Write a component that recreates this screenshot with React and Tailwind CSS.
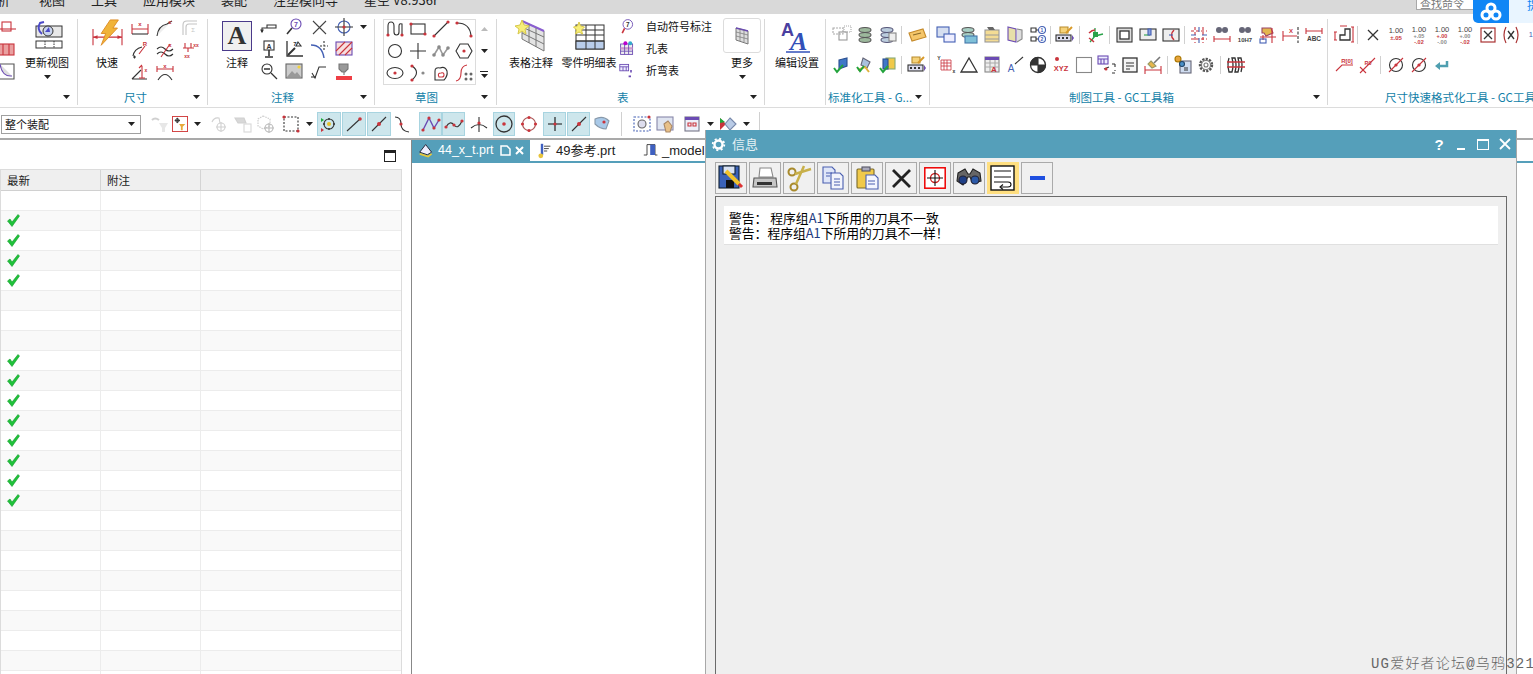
import React from "react";

const R = "#c9343c", K = "#333", B = "#4460b4", G = "#8a8a8a", P = "#6b4bb3", Y = "#e8a93a", T = "#4f9fb0";
const cjk = { fontFamily: '"Noto Sans CJK SC","Liberation Sans",sans-serif' };

const S = ({ s = 20, vb = "0 0 20 20", children, op }) => (
  <svg width={s} height={s} viewBox={vb} fill="none" stroke={K} strokeWidth="1.1" opacity={op} className="block shrink-0">{children}</svg>
);
const Dot = ({ x, y, r = 1.6, c = R }) => <circle cx={x} cy={y} r={r} fill={c} stroke="none" />;
const Tx = ({ x = 10, y, z = 6, c = R, w = 700, children }) => (
  <text x={x} y={y} fontSize={z} fill={c} stroke="none" fontWeight={w} textAnchor="middle" fontFamily="Liberation Sans">{children}</text>
);
const DimLine = ({ y = 10, x1 = 2, x2 = 18, h = 4, c = R }) => (
  <g stroke={c}><path d={`M${x1} ${y}H${x2}M${x1} ${y - h}V${y + h}M${x2} ${y - h}V${y + h}`} /></g>
);

const ic = {
  dimX: <S><DimLine y={11} h={5} /><Tx y={8}>x</Tx><path d="M2 16H18" stroke={K} /></S>,
  chamfer: <S><path d="M2 18C3 10 7 7 12 6L17 3" stroke={K} fill="#eee" /><Tx x={15} y={6}>c</Tx></S>,
  sumC: <S op=".5"><path d="M3 17V7q0-4 4-4H17M6 17V9q0-3 3-3h8" stroke={G} /><Tx x={13} y={14} c={G} w={400}>Σ</Tx></S>,
  radius: <S><path d="M3 16C4 10 8 8 12 7" stroke={K} /><path d="M9 14L15 6" stroke={R} /><Tx x={15} y={6}>R</Tx><path d="M3 17h3M4.500 15.500v3" stroke={K} /></S>,
  wave: <S><path d="M2 9q4-4 8 0t8 0M2 14q4-4 8 0t8 0" stroke={K} /><path d="M6 17L15 4" stroke={R} /><Tx x={15} y={7}>x</Tx></S>,
  holes: <S><path d="M5 3v5M11 3v5M3 8h11M8 8v4" stroke={R} /><Tx x={16} y={7} z={5}>xx</Tx><Tx x={7} y={18} z={5}>xx</Tx></S>,
  angle: <S><path d="M2 17H17M2 17L11 8" stroke={K} /><path d="M12 4V16M9 16h6M9 6l3-3" stroke={R} /><Tx x={16} y={10} z={5}>x</Tx></S>,
  arcDim: <S><path d="M3 18q7-11 14 0" stroke={K} /><DimLine y={7} h={3} /><Tx y={6}>x</Tx></S>,

  leader: <S><path d="M3 15V11h14v-3H8v3" stroke={K} /><path d="M3 15l-1-2h2z" fill={K} /></S>,
  balloon: <S><circle cx="12" cy="7" r="5" stroke={P} /><Tx x={12} y={9.500} c={P} z={7}>7</Tx><path d="M8 11L3 17" stroke={K} strokeWidth="1.600" /></S>,
  cross: <S><path d="M4 4L17 17M17 4L4 17" stroke="#444" /></S>,
  target: <S><circle cx="10" cy="10" r="6" stroke={B} /><path d="M1 10h18M10 1v18" stroke={K} /><Dot x={10} y={10} /></S>,
  aBox: <S><rect x="5" y="2" width="10" height="9" stroke={K} /><Tx y={9.500} c={K} z={7}>A</Tx><path d="M10 11v6M6 18h8" stroke={K} strokeWidth="1.600" /></S>,
  angleT: <S><path d="M3 2V17H19" stroke={K} strokeWidth="1.300" /><path d="M4 16L11 9" stroke={K} strokeWidth="2" /><Tx x={11} y={7} c={K} z={6}>7</Tx><path d="M14 3l3 4h-5z" stroke={K} /></S>,
  arcDash: <S><path d="M2 6q11 0 13 13" stroke={B} strokeWidth="1.400" /><path d="M11 7h8M15 2v9" stroke={K} strokeDasharray="2 1.500" /></S>,
  hatch: <S><rect x="2" y="3" width="16" height="13" stroke={P} fill="#f7dede" /><path d="M2 12L11 3M5 16L18 3M11 16L18 9" stroke={R} /></S>,
  zoom: <S><circle cx="8" cy="8" r="5" stroke={K} /><path d="M5 8h6M12 12L18 18" stroke={K} strokeWidth="1.300" /></S>,
  image: <S><rect x="2" y="3" width="16" height="14" stroke="#666" fill="#ccc" /><path d="M3 16l5-6 3 3 2-2 4 5z" fill="#999" stroke="none" /><circle cx="15" cy="6" r="1.600" fill="#f3d23c" stroke="none" /></S>,
  rough: <S><path d="M3 12l3 5 4-11h7" stroke={K} /><path d="M2 16h5" stroke={K} /></S>,
  stamp: <S><path d="M5 3h9v5l-3 3H8L5 8z" fill="#999" stroke="#777" /><path d="M10 11v3" stroke="#777" /><rect x="2" y="15" width="16" height="4" fill="#ef3e45" stroke="none" /></S>,

  skProfile: <S><path d="M3 16V7q0-4 3-4t3 4v6q0 3 2.500 3t2.500-3V7q0-3 3-2v11" stroke={K} /><Dot x={3} y={16} /><Dot x={17} y={16} /></S>,
  skRect: <S><rect x="3" y="5" width="14" height="10" stroke={K} /><Dot x={3} y={5} /><Dot x={17} y={15} /></S>,
  skLine: <S><path d="M3 17L17 3" stroke={K} /><Dot x={3} y={17} /><Dot x={17} y={3} /></S>,
  skArc: <S><path d="M3 4q13 0 14 13" stroke={K} /><Dot x={3} y={4} /><Dot x={17} y={17} /></S>,
  skCircle: <S><circle cx="10" cy="10" r="6.500" stroke={K} /></S>,
  skPlus: <S><path d="M2 10H18M10 2V18" stroke={K} /></S>,
  skSpline: <S><path d="M3 14L8 6l4 8 5-7" stroke="#999" strokeWidth="1.600" /><Dot x={3} y={14} c={G} r={1.800} /><Dot x={8} y={6} c={G} r={1.800} /><Dot x={12} y={14} c={G} r={1.800} /><Dot x={17} y={7} c={G} r={1.800} /></S>,
  skHex: <S><path d="M6 3h8l4 7-4 7H6l-4-7z" stroke={K} /><Dot x={10} y={10} /></S>,
  skEllipse: <S><ellipse cx="10" cy="10" rx="8" ry="5.500" stroke={K} /><Dot x={10} y={10} /></S>,
  skCurve: <S><path d="M4 3q9 6 0 14" stroke={K} /><Dot x={15} y={10} c={G} /><Dot x={4} y={3} /><Dot x={4} y={17} /></S>,
  skHeart: <S><path d="M4 17V8q0-4 5-3 5-2 7 3 1 5-3 9z" stroke={K} /><path d="M8 14q-2-4 2-4 3-1 3 2 0 2-2 2z" stroke={R} /></S>,
  skOffset: <S><path d="M2 18q5-1 5-8t6-8" stroke={R} /><g fill="#666" stroke="none"><circle cx="12" cy="11" r="1.500" /><circle cx="17" cy="11" r="1.500" /><circle cx="12" cy="16" r="1.500" /><circle cx="17" cy="16" r="1.500" /></g></S>,

  grp: <S><rect x="1" y="3" width="10" height="6" stroke="#aaa" strokeDasharray="2 1" /><rect x="7" y="7" width="8" height="8" stroke="#999" /><rect x="12" y="1" width="7" height="6" stroke="#aaa" strokeDasharray="1 1" /></S>,
  stack: <S><g stroke="#555" fill="#9cb89c"><ellipse cx="10" cy="5" rx="6" ry="2.500" /><ellipse cx="10" cy="10" rx="6" ry="2.500" /><ellipse cx="10" cy="15" rx="6" ry="2.500" /></g></S>,
  stackT: <S><g stroke="#557" fill="#bcd"><ellipse cx="9" cy="5" rx="6" ry="2.500" /><ellipse cx="9" cy="10" rx="6" ry="2.500" /><ellipse cx="9" cy="15" rx="6" ry="2.500" /></g><rect x="11" y="8" width="7" height="8" fill="#eee" stroke="#888" /></S>,
  tag: <S><path d="M2 8l14-4 3 8-14 4z" fill="#f5c66a" stroke="#c58a2a" /><path d="M6 10l8-2" stroke="#8a6a2a" /></S>,
  check1: <S><path d="M7 5l8-2v8l-8 3z" fill="#3f78c8" stroke="#2a4f90" /><path d="M2 13l3 4 6-7" stroke="#22a33c" strokeWidth="2" /></S>,
  check2: <S><path d="M8 3l7 4-3 6-6-3z" fill="#a9c0dd" stroke="#667" /><path d="M3 15l7-3 4 5" stroke="#e0b23c" strokeWidth="2" /><path d="M2 12l3 4 4-5" stroke="#22a33c" strokeWidth="2" /></S>,
  check3: <S><rect x="8" y="3" width="9" height="11" fill="#f0c94a" stroke="#8a7" /><rect x="5" y="4" width="5" height="10" fill="#3f78c8" stroke="#2a4f90" /><path d="M2 13l3 4 5-6" stroke="#22a33c" strokeWidth="2" /></S>,
  boxEdit: <S><path d="M5 2h8v6H5z" fill="#f5d27a" stroke="#b98c2c" /><rect x="1" y="10" width="15" height="6" fill="#dde" stroke={K} /><g fill={K} stroke="none"><rect x="3" y="12" width="2" height="2" /><rect x="7" y="12" width="2" height="2" /><rect x="11" y="12" width="2" height="2" /></g><path d="M17 10v6l2-3z" fill={P} stroke="none" /><path d="M11 8l6-6" stroke="#d99a2a" strokeWidth="2" /></S>,

  win: <S><rect x="1" y="2" width="12" height="10" fill="#d5def0" stroke={B} /><rect x="8" y="9" width="11" height="8" fill="#eef" stroke={B} /></S>,
  stackG: <S><g stroke="#555" fill="#a8cfc4"><ellipse cx="9" cy="5" rx="6" ry="2.500" /><ellipse cx="9" cy="10" rx="6" ry="2.500" /></g><rect x="6" y="11" width="12" height="7" fill="#7fc0d8" stroke="#47a" /></S>,
  tblY: <S><rect x="3" y="5" width="14" height="12" fill="#f4dc94" stroke="#999" /><path d="M3 10h14M3 14h14" stroke="#999" /><path d="M5 2h6l2 3H7z" fill="#666" stroke="none" /></S>,
  pen: <S><path d="M3 2l8 2v13l-8-2z" fill="#e7dfa9" stroke="#6b4bb3" /><path d="M12 4l5 1v9l-5 3" fill="#ddd" stroke="#888" /></S>,
  nums: <S><circle cx="14" cy="5" r="3.500" stroke={B} /><circle cx="14" cy="14" r="3.500" stroke={B} /><Tx x={14} y={7} z={5} c={B}>1</Tx><Tx x={14} y={16} z={5} c={B}>2</Tx><path d="M3 3h5v4H3zM3 12h5v4H3zM8 5h2M8 14h2" stroke={K} /></S>,
  axis: <S><path d="M9 11V3M9 11l8-2M9 11l-5 6" stroke="#2aa24a" strokeWidth="1.300" /><rect x="7" y="7" width="5" height="5" fill="#2aa24a" stroke="none" /><path d="M3 8q3-3 6-3M3 13q3 2 5 4" stroke={R} strokeWidth="1.500" /></S>,
  frame: <S><rect x="2" y="3" width="15" height="14" fill="#ddd" stroke={K} /><rect x="5" y="6" width="9" height="8" fill="#fff" stroke={K} strokeWidth="1.300" /></S>,
  frameB: <S vb="0 0 20 20"><rect x="2" y="4" width="16" height="11" fill="#eee" stroke={K} /><path d="M6 10h6" stroke="#2aa24a" /><rect x="10" y="4" width="3" height="6" fill="#88a0dd" stroke={B} /></S>,
  frameC: <S><rect x="2" y="4" width="16" height="12" fill="#eee" stroke={K} /><path d="M13 5q-5 5 0 10" stroke={R} strokeWidth="1.500" /><path d="M8 10h4" stroke={B} /></S>,
  dashGrid: <S><path d="M6 2v16M14 2v16M2 6h16M2 14h16" stroke={R} strokeDasharray="3 2" /><path d="M2 10h5M13 10h5M10 2v5M10 13v5" stroke={B} /></S>,
  binoDim: <S><circle cx="7" cy="5" r="3" fill="#667" stroke="none" /><circle cx="13" cy="5" r="3" fill="#667" stroke="none" /><DimLine y={14} h={3} /></S>,
  bino10: <S><circle cx="7" cy="5" r="3" fill="#667" stroke="none" /><circle cx="13" cy="5" r="3" fill="#667" stroke="none" /><Tx y={17} z={6} c="#444">10H7</Tx></S>,
  markGold: <S><path d="M4 3h9l2 5-7 3-2-3H4z" fill="#e3b64f" stroke="#946" /><path d="M2 12h16M14 3v15M5 10v5" stroke={R} /><rect x="2" y="14" width="6" height="4" stroke={B} /></S>,
  dimDash: <S><path d="M2 6v10M2 11h14" stroke={R} /><path d="M17 2v16" stroke={K} strokeDasharray="3 1.500" /><Tx x={10} y={8}>X</Tx></S>,
  abc: <S><DimLine y={6} h={3} /><Tx y={16} c="#444" z={6.500}>ABC</Tx></S>,
  gridX: <S><Tx x={3} y={5} z={5} c={K}>Y</Tx><path d="M5 5h10v10H5zM5 8h10M5 11h10M8 5v10M11 5v10" stroke={R} strokeWidth=".8" /><Tx x={18} y={18} z={5} c={K}>x</Tx></S>,
  tri: <S><path d="M10 3l8 14H2z" stroke={K} strokeWidth="1.300" /></S>,
  tblA: <S><rect x="3" y="2" width="14" height="15" fill="#eee" stroke="#888" /><rect x="3" y="2" width="14" height="3" fill={P} stroke="none" /><path d="M3 8h14M3 12h14M8 5v12M13 5v12" stroke="#aaa" /><Tx x={12} y={17} z={8} c={R}>A</Tx></S>,
  aArrow: <S><Tx x={6} y={17} z={10} c={B} w={400}>A</Tx><path d="M10 9L18 2" stroke={K} /></S>,
  quarter: <S><circle cx="10" cy="10" r="7.500" fill="#fff" stroke={K} strokeWidth="1.300" /><path d="M10 10V2.500a7.500 7.500 0 0 0-7.500 7.500zM10 10v7.500a7.500 7.500 0 0 0 7.500-7.500z" fill={K} /></S>,
  xyz: <S><Dot x={6} y={4} r={2} /><Tx y={16} z={7.500}>XYZ</Tx></S>,
  blank: <S><rect x="2.500" y="2.500" width="15" height="15" stroke="#888" /></S>,
  tblArrow: <S><rect x="1" y="1" width="10" height="8" fill="#eef" stroke={P} /><path d="M1 4h10M4 4v5M7 4v5" stroke={P} /><path d="M15 9h3M18 9v3M18 16v-1M15 18h3M7 14l5-2" stroke={K} /><Dot x={9} y={14} r={1.500} /></S>,
  doc: <S><rect x="3" y="3" width="14" height="14" stroke={K} fill="#f4f4f4" strokeWidth="1.300" /><path d="M6 8h8M6 11h8M6 14h4" stroke={K} /></S>,
  brush: <S><path d="M17 2l-6 6" stroke="#777" strokeWidth="1.600" /><path d="M8 6l5 5-4 2-4-4z" fill="#e8b74a" stroke="#996" /><DimLine y={15} h={4} /></S>,
  cfg: <S><rect x="7" y="6" width="11" height="12" fill="#cfdcf0" stroke="#667" /><circle cx="5" cy="4" r="3" fill="#e7a43c" stroke="#a70" /><circle cx="9" cy="9" r="2.500" fill="#4a90c8" stroke="#246" /><path d="M11 13h4M11 15h4" stroke={K} /></S>,
  gear: <S><circle cx="10" cy="10" r="6" stroke="#555" strokeWidth="2.400" strokeDasharray="2.200 1.200" /><circle cx="10" cy="10" r="4.500" stroke="#777" /><circle cx="10" cy="10" r="2" stroke="#777" /></S>,
  spring: <S><path d="M3 3q-2 6 0 14h3q2-7 0-14h3q2 7 0 14h3q2-7 0-14h3q2 7 0 14" stroke={K} strokeWidth="1.300" /><path d="M1 7h18M1 12h18" stroke={R} strokeWidth="1.300" /></S>,

  stepDim: <S><path d="M6 15V10h5V4h5v11z" stroke={K} strokeWidth="1.300" /><path d="M1 7v8M0 7h3M0 15h3M19 2v15M17 2h3M17 17h3M6 1h7" stroke={R} /></S>,
  xThin: <S><path d="M5 5L15 15M15 5L5 15" stroke={K} strokeWidth="1.300" /></S>,
  xBox: <S><rect x="3" y="3" width="14" height="14" stroke="#a33" strokeWidth="1.200" /><path d="M6 6L14 14M14 6L6 14" stroke={K} strokeWidth="1.300" /></S>,
  xParen: <S><path d="M5 2q-4 8 0 16M15 2q4 8 0 16" stroke="#a33" strokeWidth="1.200" /><path d="M7 6L13 14M13 6L7 14" stroke={K} strokeWidth="1.300" /></S>,
  rDim: <S><path d="M2 16L8 10H19" stroke={R} /><Tx x={13} y={8} z={6}>R[0]</Tx></S>,
  rSlant: <S><path d="M3 18L18 3" stroke={R} /><path d="M3 12L9 18" stroke={R} /><Tx x={11} y={10} z={5.500}>R0</Tx></S>,
  dia1: <S><circle cx="10" cy="10" r="6.500" stroke={K} /><path d="M3 17L17 3" stroke={R} /><Dot x={10} y={10} r={1.600} /></S>,
  backArrow: <S><path d="M15 6v5H7" stroke={T} strokeWidth="2.500" /><path d="M8 7l-5 4 5 4z" fill={T} stroke="none" /></S>,
  tol1: <S vb="0 0 20 20"><Tx y={8} z={7.500} c="#444" w={400}>1.00</Tx><Tx y={15} z={6} w={700}>±.05</Tx></S>,
  tol2: <S><Tx y={7} z={7.500} c="#444" w={400}>1.00</Tx><Tx y={13} z={5.500} c={G}>+.05</Tx><Tx y={19} z={5.500}>-.02</Tx></S>,
  tol3: <S><Tx y={7} z={7.500} c="#444" w={400}>1.00</Tx><Tx y={13} z={5.500} c={R}>+.00</Tx><Tx y={19} z={5.500} c={G}>-.00</Tx></S>,
  tol4: <S><Tx y={7} z={7.500} c="#444" w={400}>1.00</Tx><Tx y={13} z={5.500} c={G}>+.00</Tx><Tx y={19} z={5.500}>-.02</Tx></S>,
  tol5: <S><Tx y={12} z={7.500} c={B} w={400}>1.0</Tx></S>,

  filterG: <S op=".45"><path d="M2 6q3-3 7 0" stroke="#999" strokeWidth="2" /><path d="M9 9h9l-3 5v4h-3v-4z" fill="#ccc" stroke="none" /></S>,
  selFilter: <S s={16} vb="0 0 18 18"><rect x=".5" y=".5" width="17" height="17" stroke="#d03a3a" /><path d="M3 5h6M6 2v6" stroke={K} /><circle cx="6" cy="5" r="2" stroke={K} /><path d="M8 9h7l-3 3v4h-2v-4z" fill={Y} stroke="none" /></S>,
  faded1: <S op=".45"><path d="M3 8q2-5 7-4l1 5" stroke="#999" /><circle cx="12" cy="13" r="4" stroke="#999" /><path d="M7 13h10M12 8v10" stroke="#999" /></S>,
  faded2: <S op=".45"><path d="M2 4h9l2 5H5z" fill="#aaa" stroke="#999" /><rect x="11" y="10" width="7" height="8" stroke="#aaa" /></S>,
  faded3: <S op=".5"><path d="M7 2l7 3v7l-7 3-5-3V5z" stroke="#999" strokeDasharray="1.500 1" /><circle cx="13" cy="14" r="4" stroke="#777" /><path d="M8 14h10M13 9v10" stroke="#777" /></S>,
  selBox: <S><rect x="3" y="3" width="14" height="14" stroke={K} strokeDasharray="2 1.500" /><Dot x={3} y={3} /><Dot x={17} y={17} /></S>,
  snap1: <S><circle cx="10" cy="10" r="5" stroke={K} /><Dot x={10} y={10} c="#e6c02c" r={2} /><path d="M2 4l3 2-3 2z" fill="#1faa3c" stroke="none" /><path d="M2 14l3 2-3 2z" fill={R} stroke="none" /><circle cx="5" cy="10" r="1" fill={K} stroke="none" /><circle cx="15" cy="10" r="1" fill={K} stroke="none" /><circle cx="10" cy="5" r="1" fill={K} stroke="none" /><circle cx="10" cy="15" r="1" fill={K} stroke="none" /></S>,
  end: <S><path d="M3 17L16 5" stroke={K} /><Dot x={16} y={5} r={1.800} /></S>,
  mid: <S><path d="M3 17L17 3" stroke={K} /><Dot x={10} y={10} r={2} /></S>,
  sCurve: <S><path d="M3 3q6 0 6 7t8 8" stroke={K} /><Dot x={9} y={10} /></S>,
  poly: <S><path d="M2 16L8 4l5 10 5-8" stroke={P} strokeWidth="1.400" /><Dot x={2} y={16} /><Dot x={8} y={4} /><Dot x={13} y={14} /><Dot x={18} y={6} /></S>,
  swave: <S><path d="M2 13q4-7 8-2t8-4" stroke={K} /><Dot x={2} y={13} /><Dot x={10} y={11} /><Dot x={18} y={7} /></S>,
  tee: <S><path d="M2 14q8-7 16 0M10 3V18" stroke={K} /><Dot x={10} y={9} /></S>,
  cCircle: <S><circle cx="10" cy="10" r="8" stroke={K} strokeWidth="1.300" /><Dot x={10} y={10} r={1.800} /></S>,
  qCircle: <S><circle cx="10" cy="10" r="6.500" stroke="#a55" /><Dot x={10} y={3.500} /><Dot x={10} y={16.500} /><Dot x={3.500} y={10} /><Dot x={16.500} y={10} /></S>,
  plusT: <S><path d="M3 10H17M10 3V17" stroke="#111" /><Dot x={10} y={10} /></S>,
  shell: <S><path d="M3 5q8-4 14 2l-3 8Q8 15 3 10z" fill="#a9c9e8" stroke="#89a" /><Dot x={12} y={8} /></S>,
  zoomWin: <S><rect x="2" y="3" width="16" height="14" stroke={B} strokeDasharray="2 1.500" /><circle cx="10" cy="10" r="4" fill="#dde" stroke="#666" /><Dot x={17} y={3} /></S>,
  hand: <S><rect x="2" y="3" width="16" height="13" fill="#dfe4f0" stroke="#88a" /><path d="M9 10l4-3 4 5-2 6h-4z" fill="#e8c088" stroke="#a86" /></S>,
  tbl4: <S><rect x="3" y="3" width="14" height="14" fill="#eef0fa" stroke="#778" /><rect x="3" y="3" width="14" height="3" fill={P} stroke="none" /><path d="M6 9h3v3H6zM11 9h3v3h-3z" stroke={R} /></S>,
  diamond: <S><path d="M2 4l6 6-6 6z" fill={R} stroke="none" /><path d="M2 4l5 4-5 1z" fill="#1faa3c" stroke="none" /><path d="M12 4l6 6-6 6-5-6z" fill="#b9cbe6" stroke="#78a" /></S>,

  saveEdit: <S s={28} vb="0 0 28 28"><rect x="2" y="2" width="20" height="22" fill="#3a62b8" stroke="#123" /><rect x="6" y="2" width="12" height="8" fill="#d8e2f4" stroke="#123" /><rect x="9" y="16" width="8" height="8" fill="#111" stroke="none" /><path d="M9 7L22 20" stroke="#f1c32c" strokeWidth="4" /><path d="M22 20l3 3" stroke="#d33" strokeWidth="3" /></S>,
  print: <S s={28} vb="0 0 28 28"><path d="M9 4h11l2 9H8z" fill="#fff" stroke="#888" /><path d="M3 14h22l1 9H2z" fill="#c6c6c6" stroke="#555" /><rect x="6" y="18" width="15" height="3" fill="#333" stroke="none" /></S>,
  scissors: <S s={28} vb="0 0 28 28"><circle cx="7" cy="8" r="3.500" stroke="#a88a2c" strokeWidth="2" /><circle cx="9" cy="23" r="3.500" stroke="#a88a2c" strokeWidth="2" /><path d="M10 10L26 5M11 20L19 2" stroke="#c8b04a" strokeWidth="2.500" /></S>,
  copy: <S s={28} vb="0 0 28 28"><path d="M4 3h9l3 3v13H4z" fill="#dfe6f8" stroke="#4a5fb0" /><path d="M12 9h9l3 3v13H12z" fill="#f2f4fc" stroke="#4a5fb0" /><path d="M7 9h6M7 12h4M15 15h6M15 18h6M15 21h6" stroke="#4a5fb0" /></S>,
  paste: <S s={28} vb="0 0 28 28"><rect x="4" y="5" width="17" height="19" rx="1" fill="#f0c94a" stroke="#7a6a2a" /><rect x="9" y="3" width="8" height="4" fill="#aab" stroke="#556" /><path d="M13 11h9l3 3v11H13z" fill="#f4f6ff" stroke="#4a5fb0" /><path d="M15 17h7M15 20h7" stroke="#4a5fb0" /></S>,
  bigX: <S s={28} vb="0 0 28 28"><path d="M6 6L23 23M23 6L6 23" stroke="#222" strokeWidth="2.800" /></S>,
  redTarget: <S s={22} vb="0 0 22 22"><rect x=".8" y=".8" width="20.400" height="20.400" fill="#fff" stroke="#e00" strokeWidth="1.500" /><circle cx="11" cy="11" r="4.500" stroke="#c22" strokeWidth="1.300" /><path d="M3 11H19M11 3V19" stroke="#111" /></S>,
  bino: <S s={28} vb="0 0 28 28"><path d="M3 9l7-4 3 5 2 0 3-5 7 4 1 8-8 2-3-6h-2l-5 8-6-4z" fill="#666" stroke="#222" /><circle cx="8" cy="16" r="4" fill="#1f3f86" stroke="#223" /><circle cx="20" cy="16" r="4" fill="#2c5aa8" stroke="#223" /></S>,
  wrap: <S s={26} vb="0 0 26 26"><rect x="1" y="1" width="23" height="24" fill="#fff" stroke="#111" strokeWidth="1.400" /><path d="M4 6h17M4 12h17M4 17h14q3 0 3 2.500T18 22h-7" stroke="#111" /><path d="M13 19.500L10 22l3 2.500" stroke="#111" /></S>,
  minus: <S s={20} vb="0 0 20 20"><rect x="3" y="8" width="15" height="4" fill="#1f4fe0" stroke="none" /></S>,
};

const Caret = () => (
  <svg width="7" height="4" viewBox="0 0 7 4" className="block shrink-0"><path d="M0 0h7L3.500 4z" fill="#222" /></svg>
);
const Cell = ({ w = 23, h = 22, children, cn = "" }) => (
  <div className={`flex shrink-0 items-center justify-center ${cn}`} style={{ width: w, height: h }}>{children}</div>
);
const Sep = ({ n = 4, h = 18 }) => {
  const ml = Math.floor((n - 1) / 2);
  return <div className="shrink-0 bg-[#d0d0d0]" style={{ width: 1, height: h, marginLeft: ml, marginRight: n - 1 - ml }} />;
};
const Row = ({ items, w = 23, cn = "" }) => (
  <div className={`flex items-center ${cn}`}>
    {items.map((k, i) =>
      typeof k === "number" ? <Sep key={i} n={k} /> : <Cell key={i} w={w}>{ic[k]}</Cell>
    )}
  </div>
);

const GroupFoot = ({ label, caretLeft, labelLeft }) => (
  <div className="relative h-[16px]">
    <span className="absolute top-0 whitespace-nowrap text-[11.5px] leading-[16px] text-[#127fa8]" style={{ left: labelLeft }}>{label}</span>
    {caretLeft != null && <span className="absolute top-[6px]" style={{ left: caretLeft }}><Caret /></span>}
  </div>
);

const Group = ({ w, label, labelLeft, caretLeft, sep = true, children }) => (
  <div className={`relative flex shrink-0 flex-col ${sep ? "border-r border-[#d8d8d8]" : ""}`} style={{ width: w, height: 86 }}>
    <div className="h-[70px]">{children}</div>
    <GroupFoot label={label} labelLeft={labelLeft} caretLeft={caretLeft} />
  </div>
);

const BigBtn = ({ w, icon, label, caret, up }) => (
  <div className="flex shrink-0 flex-col items-center" style={{ width: w }}>
    <div className="flex h-[34px] items-center justify-center">
      <div className={up ? "-mt-[6px]" : ""}>{icon}</div>
    </div>
    <div className="mt-[1px] whitespace-nowrap text-[11px] leading-[16px] text-[#111]">{label}</div>
    {caret && <div className="mt-[5px]"><Caret /></div>}
  </div>
);

const UpdateView = (
  <svg width="34" height="32" viewBox="0 0 34 32" fill="none" className="block">
    <rect x="6" y="6" width="26" height="11" fill="#e8e8e8" stroke="#333" />
    <rect x="6" y="21" width="26" height="7" stroke="#333" />
    <path d="M15 21v7M24 21v7" stroke="#333" strokeDasharray="1.500 1" />
    <circle cx="18" cy="11" r="5" stroke="#333" fill="#c9d4ee" />
    <path d="M12 14A8 8 0 0 1 10 3l4-1" stroke="#4b49c8" strokeWidth="2" />
    <path d="M15 12l4-5 1 5z" fill="#4b49c8" />
  </svg>
);
const Quick = (
  <svg width="31" height="29" viewBox="0 0 34 32" fill="none" className="block">
    <path d="M1 11V29M33 11V29M1 20H33" stroke="#c8323c" strokeWidth="1.200" />
    <path d="M1 20l5-2v4zM33 20l-5-2v4z" fill="#c8323c" />
    <path d="M20 1h9l-6 9h5L10 29l5-13h-5z" fill="#f0b43a" stroke="#dd8a22" />
  </svg>
);
const AnnoA = (
  <div className="flex h-[30px] w-[30px] items-center justify-center border-[1.500px] border-[#4a3a8a] bg-[#f0f0f0] text-[26px] font-bold leading-none text-[#333]" style={{ fontFamily: '"Liberation Serif",serif' }}>A</div>
);
const TableNote = (
  <svg width="34" height="34" viewBox="0 0 34 34" fill="none" className="block">
    <path d="M8 2L30 12V32L8 20z" fill="#e3e3e3" stroke="#777" />
    <path d="M8 2L30 12" stroke="#8a5ed0" strokeWidth="2" />
    <path d="M8 8L30 18M8 14L30 25M15 5V24M22 9V28" stroke="#777" />
    <path d="M8 1l2 5 5 1-4 3 1 5-4-3-4 3 1-5-4-3 5-1z" fill="#f7ee7a" stroke="#d8c94a" />
  </svg>
);
const PartList = (
  <svg width="34" height="28" viewBox="0 0 34 28" fill="none" className="block">
    <rect x="4" y="3" width="28" height="24" fill="#fff" stroke="#333" />
    <rect x="4" y="19" width="28" height="8" fill="#b9cdea" stroke="#333" />
    <path d="M4 8H32M4 13H32M4 19H32M14 3V27M23 3V27" stroke="#333" />
    <path d="M7 0l1.500 4 4 1-3 3 1 4L7 10l-3.500 2 1-4-3-3 4-1z" fill="#f7ee7a" stroke="#d8c94a" />
  </svg>
);
const EditA = (
  <svg width="34" height="34" viewBox="0 0 34 34" className="block">
    <text x="1" y="17" fontSize="18" fontWeight="700" fill="#4a3fa0" fontFamily="Liberation Sans">A</text>
    <text x="10" y="31" fontSize="26" fontWeight="700" fontStyle="italic" fill="#3250b8" fontFamily="Liberation Serif">A</text>
    <path d="M6 33H30" stroke="#3250b8" strokeWidth="1.500" />
  </svg>
);
const Cloud = (
  <svg width="22" height="19" viewBox="0 0 22 19" fill="none" className="block">
    <circle cx="11" cy="6" r="4" stroke="#fff" strokeWidth="3" />
    <circle cx="6" cy="13" r="4" stroke="#fff" strokeWidth="3" />
    <circle cx="16" cy="13" r="4" stroke="#fff" strokeWidth="3" />
  </svg>
);
const Check = () => (
  <svg width="13" height="13" viewBox="0 0 13 13" className="block"><path d="M0.500 7L3 5l2 3 6-7.500L12.500 2 5 12.500z" fill="#1fc23a" stroke="#119a2a" strokeWidth=".6" /></svg>
);

const TB = ({ w, ml = 0, active, k, caret }) => (
  <div
    className={`flex h-[24px] shrink-0 items-center justify-center ${active ? "border border-[#a8d4e0] bg-[#cde6ec]" : ""}`}
    style={{ width: w, marginLeft: ml }}
  >
    {caret ? <Caret /> : ic[k]}
  </div>
);

const checks = new Set([1, 2, 3, 4, 8, 9, 10, 11, 12, 13, 14, 15]);
const dlgBtns = ["saveEdit", "print", "scissors", "copy", "paste", "bigX", "redTarget", "bino", "wrap", "minus"];

export default function App() {
  return (
    <div className="relative h-[674px] w-[1533px] overflow-hidden bg-white" style={cjk}>
      {/* menu bar */}
      <div className="flex h-[14px] items-start gap-[26px] overflow-hidden bg-[#d9d9d9] text-[13px] leading-[14px] text-[#222]">
        <span className="-mt-[7px] -ml-[3px] mr-[3px]">析</span>
        <span className="-mt-[7px]">视图</span>
        <span className="-mt-[7px]">工具</span>
        <span className="-mt-[7px]">应用模块</span>
        <span className="-mt-[7px]">装配</span>
        <span className="-mt-[7px]">注塑模向导</span>
        <span className="-mt-[7px]">星空 V8.936r</span>
      </div>

      {/* ribbon */}
      <div className="flex h-[94px] items-start overflow-hidden border-b border-[#dcdcdc] pt-[5px]">
        <Group w={78} label="" labelLeft={0} caretLeft={63}>
          <div className="flex">
            <div className="-mt-[1px] flex w-[16px] shrink-0 flex-col items-end overflow-hidden">
              <Cell w={20} h={21} cn="shrink-0"><S s={20}><rect x="6" y="3" width="9" height="9" stroke={R} /><path d="M0 10H20" stroke={R} /></S></Cell>
              <Cell w={20} h={21} cn="shrink-0"><S s={20}><rect x="1" y="4" width="17" height="11" fill="#e9a0a0" stroke={R} /><path d="M7 4v11M13 4v11" stroke={R} /></S></Cell>
              <Cell w={20} h={21} cn="shrink-0"><S s={20}><path d="M2 3H18V18H2z" stroke="#555" /><path d="M4 3q2 13 12 12" stroke={P} fill="#ddd" /></S></Cell>
            </div>
            <div className="ml-[1px]"><BigBtn w={60} icon={UpdateView} label="更新视图" caret /></div>
          </div>
        </Group>
        <Group w={130} label="尺寸" labelLeft={46} caretLeft={115}>
          <div className="flex">
            <BigBtn w={58} icon={Quick} label="快速" up />
            <div className="-ml-[8.500px] -mt-[2px] flex flex-col">
              <Row w={25} items={["dimX", "chamfer", "sumC"]} />
              <Row w={25} items={["radius", "wave", "holes"]} />
              <Row w={25} items={["angle", "arcDim"]} />
            </div>
          </div>
        </Group>
        <Group w={167} label="注释" labelLeft={63} caretLeft={152}>
          <div className="flex">
            <BigBtn w={58} icon={AnnoA} label="注释" />
            <div className="-ml-[9.500px] -mt-[3px] flex flex-col">
              <div className="flex items-center">
                <Row w={25} items={["leader", "balloon", "cross", "target"]} />
                <div className="ml-[3px]"><Caret /></div>
              </div>
              <Row w={25} items={["aBox", "angleT", "arcDash", "hatch"]} />
              <Row w={25} items={["zoom", "image", "rough", "stamp"]} />
            </div>
          </div>
        </Group>
        <Group w={122} label="草图" labelLeft={40} caretLeft={106}>
          <div className="flex pl-[8px]">
            <div className="grid h-[66px] w-[93px] grid-cols-[repeat(4,23px)] content-center justify-center border border-[#dcdcdc] pb-[3px]">
              {["skProfile", "skRect", "skLine", "skArc", "skCircle", "skPlus", "skSpline", "skHex", "skEllipse", "skCurve", "skHeart", "skOffset"].map((k) => (
                <Cell key={k} h={22}>{ic[k]}</Cell>
              ))}
            </div>
            <div className="ml-[4px] flex flex-col items-center gap-[18px] pt-[8px]">
              <svg width="7" height="4" viewBox="0 0 7 4" className="block"><path d="M0 4L3.500 0 7 4z" fill="#bbb" /></svg>
              <Caret />
              <div className="flex flex-col items-center gap-[2px]"><div className="h-[1px] w-[8px] bg-[#222]" /><Caret /></div>
            </div>
          </div>
        </Group>
        <Group w={268} label="表" labelLeft={120} caretLeft={253}>
          <div className="flex">
            <BigBtn w={68} icon={TableNote} label="表格注释" />
            <BigBtn w={48} icon={PartList} label="零件明细表" />
            <div className="-mt-[4px] ml-[6px] flex w-[101px] shrink-0 flex-col text-[11px] leading-[22px] text-[#111]">
              <div className="flex items-center gap-[3px]"><S s={16}><circle cx="11" cy="8" r="6" stroke={P} /><Tx x={11} y={11} z={8} c={K}>7</Tx><path d="M7 13L4 19" stroke={R} strokeWidth="2" /></S><span className="ml-[8px]">自动符号标注</span></div>
              <div className="flex items-center gap-[3px]"><S s={16}><rect x="2" y="5" width="15" height="13" fill="#eee" stroke={P} /><rect x="2" y="9" width="15" height="3" fill="#c9c" stroke="none" /><path d="M7 5v13M12 5v13M2 14h15" stroke={P} /><circle cx="8" cy="4" r="2.500" fill="#b0c" stroke="none" /><circle cx="14" cy="4" r="2.500" fill="#3ac" stroke="none" /></S><span className="ml-[8px]">孔表</span></div>
              <div className="flex items-center gap-[3px]"><S s={16}><rect x="1" y="3" width="11" height="8" fill="#eef" stroke={P} /><path d="M1 6h11M5 6v5M9 6v5" stroke={P} /><path d="M15 10v3M12 18h3" stroke={P} strokeWidth="2" /></S><span className="ml-[8px]">折弯表</span></div>
            </div>
            <div className="flex w-[44px] shrink-0 flex-col items-center">
              <div className="-mt-[1px] flex h-[35px] w-[38px] items-center justify-center rounded-[3px] border border-[#dcdcdc]">
                <svg width="16" height="18" viewBox="0 0 16 18" fill="none"><path d="M2 1L14 4V17L2 13z" fill="#ddd" stroke="#777" /><path d="M2 1L14 4" stroke={P} strokeWidth="1.500" /><path d="M2 5L14 8M2 9L14 12M6 2V14M10 3V15" stroke="#777" strokeWidth=".7" /></svg>
              </div>
              <div className="mt-[1px] text-[11px] leading-[16px] text-[#111]">更多</div>
              <div className="mt-[5px]"><Caret /></div>
            </div>
          </div>
        </Group>
        <Group w={61} label="" labelLeft={0}>
          <div className="ml-[1.500px]"><BigBtn w={61} icon={EditA} label="编辑设置" /></div>
        </Group>
        <Group w={104} label="标准化工具 - G..." labelLeft={2} caretLeft={89}>
          <div className="flex flex-col gap-[8px] pl-[4px] pt-[5px]">
            <Row items={["grp", "stack", "stackT", 6, "tag"]} />
            <Row items={["check1", "check2", "check3", 6, "boxEdit"]} />
          </div>
        </Group>
        <Group w={398} label="制图工具 - GC工具箱" labelLeft={139} caretLeft={383}>
          <div className="flex flex-col gap-[8px] pl-[4px] pt-[5px]">
            <Row items={["win", "stackG", "tblY", "pen", "nums", 4, "boxEdit", 8, "axis", 6, "frame", "frameB", "frameC", 5, "dashGrid", "binoDim", "bino10", "markGold", "dimDash", "abc"]} />
            <Row items={["gridX", "tri", "tblA", "aArrow", "quarter", "xyz", "blank", "tblArrow", "doc", "brush", 7, "cfg", "gear", 7, "spring"]} />
          </div>
        </Group>
        <Group w={205} sep={false} label="尺寸快速格式化工具 - GC工具箱" labelLeft={57}>
          <div className="flex flex-col gap-[8px] pl-[4px] pt-[5px]">
            <Row items={["stepDim", 6, "xThin", "tol1", "tol2", "tol3", "tol4", "xBox", "xParen", "tol5"]} />
            <Row items={["rDim", "rSlant", 6, "dia1", "dia1", "backArrow"]} />
          </div>
        </Group>
      </div>

      {/* selection toolbar */}
      <div className="flex h-[32px] items-center border-b-[2px] border-[#a9a9a9] pl-[1px] pt-[2px]">
        <div className="flex h-[19px] w-[140px] shrink-0 items-center justify-between border border-[#a0a0a0] pl-[3px] pr-[5px] text-[11px] text-[#111]">
          <span>整个装配</span>
          <Caret />
        </div>
        <TB w={20} ml={9} k="filterG" />
        <TB w={20} k="selFilter" />
        <TB w={14} caret />
        <TB w={30} k="faded1" />
        <TB w={18} k="faded2" />
        <TB w={28} k="faded3" />
        <TB w={22} k="selBox" />
        <TB w={14} caret />
        <TB w={24} ml={1} active k="snap1" />
        <TB w={24} ml={1} active k="end" />
        <TB w={24} ml={1} active k="mid" />
        <TB w={22} k="sCurve" />
        <TB w={23} ml={6} active k="poly" />
        <TB w={23} active k="swave" />
        <TB w={28} k="tee" />
        <TB w={22} active k="cCircle" />
        <TB w={28} k="qCircle" />
        <TB w={23} active k="plusT" />
        <TB w={23} ml={1} active k="mid" />
        <TB w={24} k="shell" />
        <div className="ml-[7px] h-[24px] w-[1px] shrink-0 bg-[#d0d0d0]" />
        <TB w={22} ml={9} k="zoomWin" />
        <TB w={24} k="hand" />
        <TB w={30} k="tbl4" />
        <TB w={6} caret />
        <TB w={30} k="diamond" />
        <TB w={6} caret />
        <div className="ml-[10px] h-[24px] w-[1px] shrink-0 bg-[#d0d0d0]" />
      </div>

      {/* main */}
      <div className="flex h-[534px]">
        {/* left panel */}
        <div className="w-[412px] shrink-0 border-r border-[#888888]">
          <div className="flex h-[29px] items-center justify-end pr-[15px] pt-[2px]">
            <div className="h-[12px] w-[12px] border border-t-[3px] border-[#222]" />
          </div>
          <div className="w-[402px] border border-[#dcdcdc] text-[11.5px] text-[#222]">
            <div className="grid h-[21px] grid-cols-[100px_100px_1fr] border-b border-[#d0d0d0] bg-[#efefef] leading-[20px]">
              <div className="border-r border-[#d4d4d4] pl-[6px]">最新</div>
              <div className="border-r border-[#d4d4d4] pl-[6px]">附注</div>
              <div />
            </div>
            {Array.from({ length: 25 }, (_, i) => (
              <div key={i} className={`grid h-[20px] grid-cols-[100px_100px_1fr] border-b border-[#ececec] ${i % 2 ? "bg-[#f9f9f9]" : "bg-white"}`}>
                <div className="flex items-center border-r border-[#ececec] pl-[6px]">{checks.has(i) && <Check />}</div>
                <div className="border-r border-[#ececec]" />
                <div />
              </div>
            ))}
          </div>
        </div>

        {/* tabs */}
        <div className="min-w-0 flex-1">
          <div className="flex h-[23px] items-stretch border-b-[2px] border-[#559fba] text-[13px] leading-[21px] text-[#222]" style={{ fontFamily: '"Liberation Sans","Noto Sans CJK SC",sans-serif' }}>
            <div className="flex w-[118px] shrink-0 items-center bg-[#559fba] pl-[6px] text-white">
              <S s={17}><path d="M2 12L9 3l7 9-5 3z" fill="#eef" stroke="#223" /><path d="M2 14l10 3 4-3" stroke="#e6c83a" strokeWidth="2" /></S>
              <span className="ml-[3px] text-[12.500px]">44_x_t.prt</span>
              <svg width="11" height="11" viewBox="0 0 11 11" fill="none" className="ml-[6px]"><path d="M1 1h6l3 3v6H1z" stroke="#fff" strokeWidth="1.500" /></svg>
              <svg width="9" height="9" viewBox="0 0 9 9" className="ml-[4px]"><path d="M1 1L8 8M8 1L1 8" stroke="#fff" strokeWidth="2" /></svg>
            </div>
            <div className="flex w-[108px] shrink-0 items-center pl-[6px]">
              <S s={16}><path d="M6 1h3v14H6z" fill="#3f60c0" stroke="none" /><path d="M10 4h8M10 7h6M10 10h4" stroke={K} /><circle cx="6" cy="16" r="3" fill="#e7c33c" stroke="none" /></S>
              <span className="ml-[4px]">49参考.prt</span>
            </div>
            <div className="flex shrink-0 items-center pl-[5px]">
              <S s={16}><path d="M1 15H5V2h10v13h3" stroke={K} /><rect x="9" y="2" width="6" height="13" fill="#3f60c0" stroke="none" /></S>
              <span className="ml-[3px]">_model1.prt</span>
            </div>
          </div>
        </div>
      </div>

      {/* floating information window */}
      <div className="absolute left-[705px] top-[130px] flex h-[544px] w-[812px] flex-col border-x border-[#a8a8a8] bg-[#efefef]">
        <div className="flex h-[28px] shrink-0 items-center bg-[#559fba] pl-[5px] text-white">
          <svg width="15" height="15" viewBox="0 0 15 15" fill="none"><circle cx="7.500" cy="7.500" r="4" stroke="#fff" strokeWidth="2.400" /><circle cx="7.500" cy="7.500" r="5.800" stroke="#fff" strokeWidth="1.800" strokeDasharray="2 2.550" /></svg>
          <span className="ml-[6px] text-[13px] leading-[28px] text-[#e4f1f5]">信息</span>
          <div className="ml-auto flex items-center">
            <span className="w-[22px] text-center text-[15px] font-bold leading-none" style={{ fontFamily: '"Liberation Sans",sans-serif' }}>?</span>
            <div className="flex w-[22px] justify-center pt-[9px]"><div className="h-[2px] w-[8px] bg-white" /></div>
            <div className="flex w-[22px] justify-center"><div className="h-[11px] w-[12px] border border-t-[2px] border-white" /></div>
            <div className="flex w-[22px] justify-center pr-[1px]"><svg width="12" height="12" viewBox="0 0 12 12"><path d="M1 1L11 11M11 1L1 11" stroke="#fff" strokeWidth="1.800" /></svg></div>
          </div>
        </div>
        <div className="flex shrink-0 gap-[2px] pl-[9px] pt-[4px]">
          {dlgBtns.map((k) => (
            <div key={k} className={`flex h-[32px] w-[32px] items-center justify-center ${k === "wrap" ? "bg-[#ffdf80]" : "border border-[#aaaaaa] bg-[#f0f0f0]"}`}>{ic[k]}</div>
          ))}
        </div>
        <div className="mx-[9px] mt-[2px] flex-1 border-l-[1.500px] border-r-[1.500px] border-t-[1.500px] border-[#6a6a6a] px-[8px] pt-[9px]">
          <div className="border-b border-[#e0e0e0] bg-white pb-[4px] pl-[5px] pt-[4px] text-[12.800px] leading-[15px] text-black" style={{ fontFamily: '"Noto Sans CJK SC",sans-serif' }}>
            <div className="whitespace-pre">警告： 程序组<span className="text-[#223a80]">A1</span>下所用的刀具不一致</div>
            <div className="whitespace-pre">警告：程序组<span className="text-[#223a80]">A1</span>下所用的刀具不一样！</div>
          </div>
        </div>
      </div>

      {/* top right overlays */}
      <div className="absolute right-[60px] top-0 h-[10px] w-[57px] overflow-hidden border-b border-l border-[#a8a8a8] bg-white pl-[3px] text-[11px] leading-[6px] text-[#777]">查找命令</div>
      <div className="absolute left-[1473px] top-0 flex h-[23px] w-[36px] items-center justify-center rounded-bl-[5px] bg-[#1086f5]">{Cloud}</div>
      <div className="absolute left-[1509px] top-0 h-[23px] w-[24px] overflow-hidden bg-[#e9f5ff] pl-[18px] text-[12px] leading-[10px] text-[#1086f5]">提</div>

      {/* watermark */}
      <div className="absolute left-[1371px] top-[656px] whitespace-nowrap text-[14px] font-light leading-[16px] tracking-[1.200px] text-[#666]" style={{ fontFamily: '"Liberation Mono","Noto Sans CJK SC",monospace' }}>UG爱好者论坛@乌鸦321</div>
    </div>
  );
}
